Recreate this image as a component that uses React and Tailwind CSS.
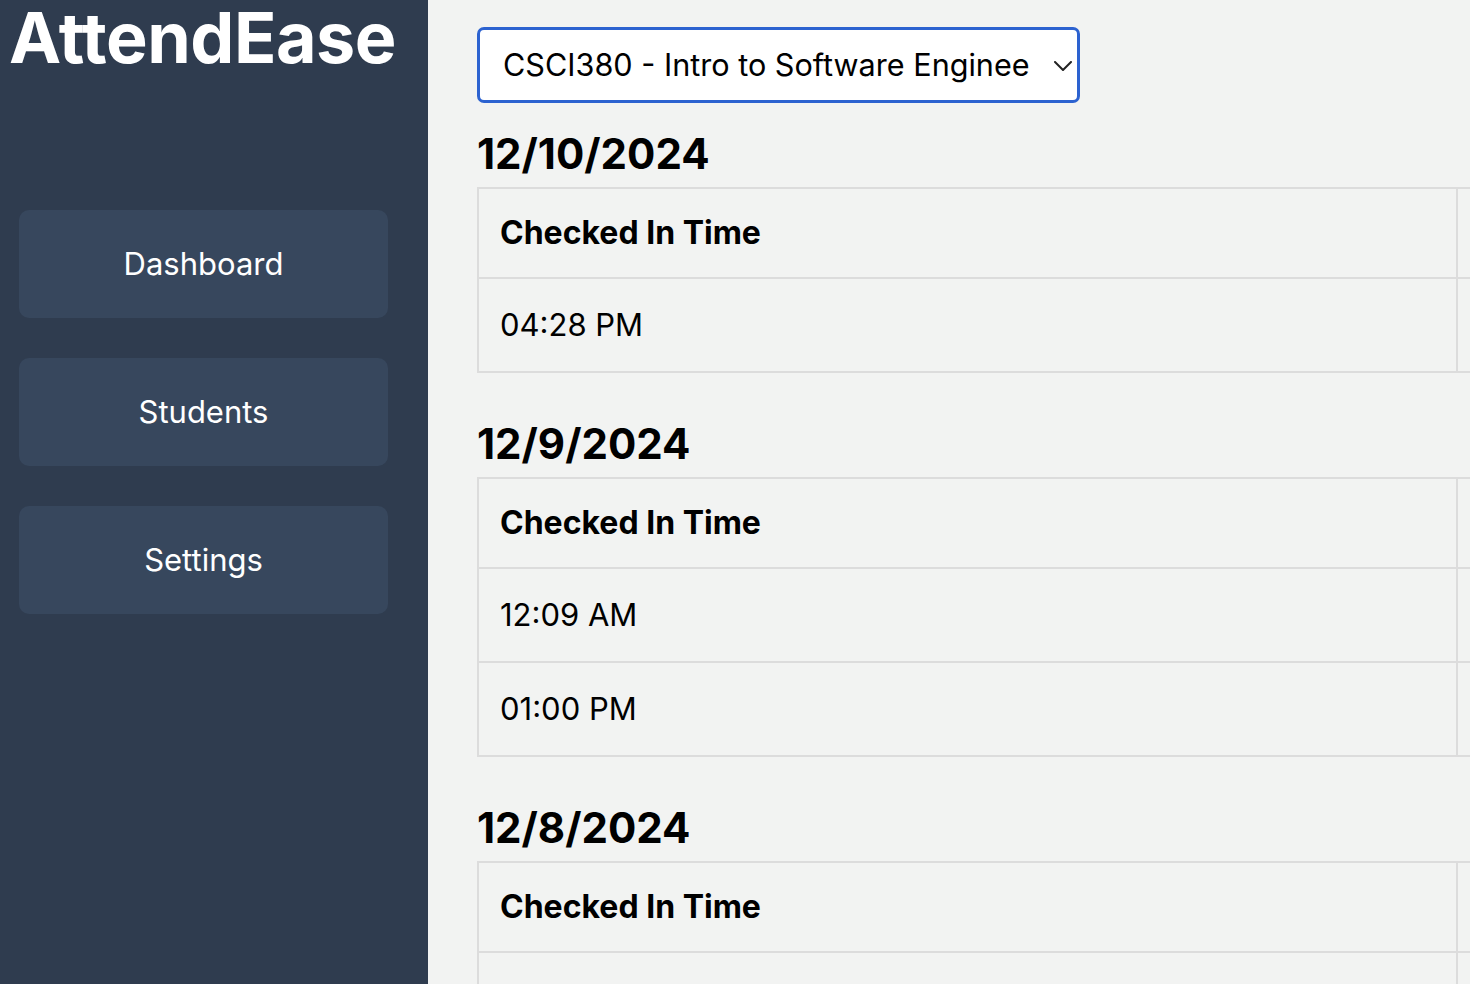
import React from 'react';

const days = [
    { date: '12/10/2024', times: ['04:28 PM'] },
    { date: '12/9/2024', times: ['12:09 AM', '01:00 PM'] },
    { date: '12/8/2024', times: [''] },
];

function NavButton({ label }) {
    return (
        <button className="flex items-center justify-center h-[108px] w-[369px] rounded-[10px] bg-[#37475d] text-white text-[31px]">
            {label}
        </button>
    );
}

function DayTable({ date, times, first }) {
    return (
        <section className={first ? 'mt-[26px]' : 'mt-[46px]'}>
            <h2 className="text-[42px] leading-[50px] font-bold text-black mb-[8px]">{date}</h2>
            <div className="w-max border-t-2 border-l-2 border-[#dcdcdc]">
                {/* header row */}
                <div className="flex border-b-2 border-[#dcdcdc]">
                    <div className="w-[979px] h-[88px] border-r-2 border-[#dcdcdc] flex items-center pl-[21px] text-[32px] font-bold text-black">
                        Checked In Time
                    </div>
                    <div className="w-[400px] h-[88px] border-r-2 border-[#dcdcdc]"></div>
                </div>
                {times.map((t, i) => (
                    <div key={i} className="flex border-b-2 border-[#dcdcdc]">
                        <div className="w-[979px] h-[92px] border-r-2 border-[#dcdcdc] flex items-center pl-[21px] text-[31px] text-black">
                            {t}
                        </div>
                        <div className="w-[400px] h-[92px] border-r-2 border-[#dcdcdc]"></div>
                    </div>
                ))}
            </div>
        </section>
    );
}

export default function App() {
    return (
        <div className="flex h-screen w-screen overflow-hidden font-['Inter','Liberation_Sans',sans-serif]">
            {/* Sidebar */}
            <aside className="w-[428px] shrink-0 h-full bg-[#2f3c4f] flex flex-col">
                <h1 className="pl-[9px] text-[70px] leading-[76px] font-bold text-white tracking-[-0.5px]">AttendEase</h1>
                <nav className="mt-[134px] pl-[19px] flex flex-col gap-[40px]">
                    <NavButton label="Dashboard" />
                    <NavButton label="Students" />
                    <NavButton label="Settings" />
                </nav>
            </aside>

            {/* Main */}
            <main className="flex-1 h-full bg-[#f2f3f2] pl-[49px] pt-[27px] overflow-hidden">
                <div className="relative flex items-center w-[603px] h-[76px] bg-white border-[3px] border-[#2c62d0] rounded-[7px] pl-[23px]">
                    <span className="whitespace-nowrap text-[30.6px] text-black">
                        CSCI380 - Intro to Software Enginee
                    </span>
                    <svg className="absolute right-[5px] top-[31px]" width="18" height="10" viewBox="0 0 18 10" fill="none">
                        <path d="M1 1l8 8 8-8" stroke="#222" strokeWidth="2" strokeLinecap="round" strokeLinejoin="round" />
                    </svg>
                </div>

                {days.map((d, i) => (
                    <DayTable key={d.date} date={d.date} times={d.times} first={i === 0} />
                ))}
            </main>
        </div>
    );
}
